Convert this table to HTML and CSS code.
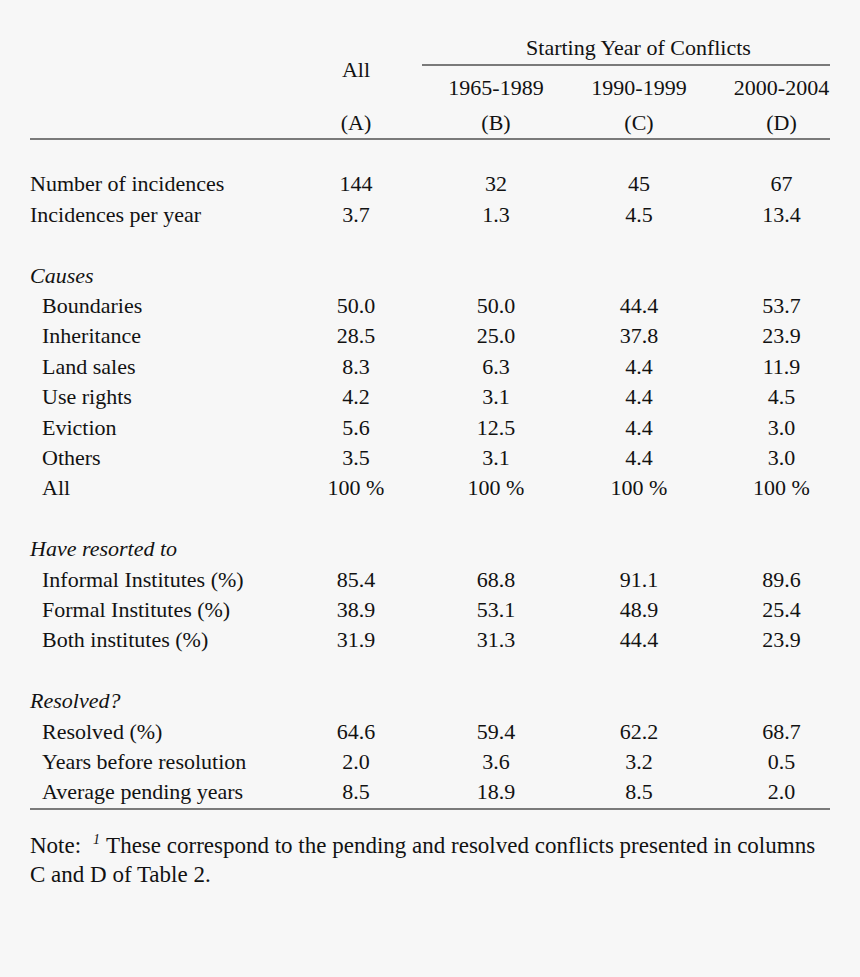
FILE: index.html
```html
<!DOCTYPE html>
<html lang="en">
<head>
    <meta charset="UTF-8">
    <meta name="viewport" content="width=device-width, initial-scale=1.0">
    <title>Land conflicts by starting year</title>
    <link rel="stylesheet" href="styles.css">
</head>
<body>
    <div class="page">
        <table class="stats">
            <colgroup>
                <col class="col-label">
                <col class="col-a">
                <col class="col-b">
                <col class="col-c">
                <col class="col-d">
            </colgroup>
            <thead>
                <tr class="head-top">
                    <th></th>
                    <th rowspan="2" class="all-head">All</th>
                    <th colspan="3" class="span-head">Starting Year of Conflicts</th>
                </tr>
                <tr class="head-years">
                    <th></th>
                    <th>1965-1989</th>
                    <th>1990-1999</th>
                    <th class="last">2000-2004</th>
                </tr>
                <tr class="head-letters">
                    <th></th>
                    <th>(A)</th>
                    <th>(B)</th>
                    <th>(C)</th>
                    <th class="last">(D)</th>
                </tr>
            </thead>
            <tbody>
                <tr class="gap"><td colspan="5"></td></tr>
                <tr><td class="label">Number of incidences</td><td>144</td><td>32</td><td>45</td><td class="last">67</td></tr>
                <tr><td class="label">Incidences per year</td><td>3.7</td><td>1.3</td><td>4.5</td><td class="last">13.4</td></tr>
                <tr class="gap"><td colspan="5"></td></tr>

                <tr><td class="label group">Causes</td><td colspan="4"></td></tr>
                <tr><td class="label sub">Boundaries</td><td>50.0</td><td>50.0</td><td>44.4</td><td class="last">53.7</td></tr>
                <tr><td class="label sub">Inheritance</td><td>28.5</td><td>25.0</td><td>37.8</td><td class="last">23.9</td></tr>
                <tr><td class="label sub">Land sales</td><td>8.3</td><td>6.3</td><td>4.4</td><td class="last">11.9</td></tr>
                <tr><td class="label sub">Use rights</td><td>4.2</td><td>3.1</td><td>4.4</td><td class="last">4.5</td></tr>
                <tr><td class="label sub">Eviction</td><td>5.6</td><td>12.5</td><td>4.4</td><td class="last">3.0</td></tr>
                <tr><td class="label sub">Others</td><td>3.5</td><td>3.1</td><td>4.4</td><td class="last">3.0</td></tr>
                <tr><td class="label sub">All</td><td>100 %</td><td>100 %</td><td>100 %</td><td class="last">100 %</td></tr>
                <tr class="gap"><td colspan="5"></td></tr>

                <tr><td class="label group">Have resorted to</td><td colspan="4"></td></tr>
                <tr><td class="label sub">Informal Institutes (%)</td><td>85.4</td><td>68.8</td><td>91.1</td><td class="last">89.6</td></tr>
                <tr><td class="label sub">Formal Institutes (%)</td><td>38.9</td><td>53.1</td><td>48.9</td><td class="last">25.4</td></tr>
                <tr><td class="label sub">Both institutes (%)</td><td>31.9</td><td>31.3</td><td>44.4</td><td class="last">23.9</td></tr>
                <tr class="gap"><td colspan="5"></td></tr>

                <tr><td class="label group">Resolved?</td><td colspan="4"></td></tr>
                <tr><td class="label sub">Resolved (%)</td><td>64.6</td><td>59.4</td><td>62.2</td><td class="last">68.7</td></tr>
                <tr><td class="label sub">Years before resolution</td><td>2.0</td><td>3.6</td><td>3.2</td><td class="last">0.5</td></tr>
                <tr class="end"><td class="label sub">Average pending years</td><td>8.5</td><td>18.9</td><td>8.5</td><td class="last">2.0</td></tr>
            </tbody>
        </table>

        <p class="note"><span class="note-tag">Note:</span><sup>1</sup>These correspond to the pending and resolved conflicts presented in columns C and D of Table 2.</p>
    </div>
</body>
</html>
```

FILE: styles.css
```css
* {
    margin: 0;
    padding: 0;
    box-sizing: border-box;
}

body {
    font-family: 'Liberation Serif', 'Times New Roman', serif;
    font-size: 22px;
    color: #121212;
    background: #f7f7f7;
}

.page {
    width: 860px;
    min-height: 977px;
    padding: 31px 30px 0 30px;
}

.stats {
    width: 800px;
    table-layout: fixed;
    border-collapse: collapse;
}

.col-label { width: 260px; }
.col-a { width: 132px; }
.col-b { width: 148px; }
.col-c { width: 138px; }
.col-d { width: 122px; }

.stats th,
.stats td {
    font-weight: normal;
    text-align: center;
    padding: 0;
    white-space: nowrap;
}

.stats .last {
    padding-left: 25px;
}

.head-top th {
    height: 34px;
}

.head-top .span-head {
    padding-left: 25px;
    vertical-align: middle;
    border-bottom: 2px solid #7a7a7a;
}

.head-top .all-head {
    vertical-align: middle;
}

.head-years th {
    height: 44px;
}

.head-letters th {
    height: 30px;
    vertical-align: middle;
    padding-bottom: 1px;
    border-bottom: 2px solid #7a7a7a;
}

.stats tbody td {
    height: 30.4px;
    line-height: 30.4px;
}

.stats tbody td.label {
    text-align: left;
}

.group {
    font-style: italic;
}

.stats tbody td.sub {
    padding-left: 12px;
}

.stats tr.end td {
    border-bottom: 2px solid #7a7a7a;
}

.note {
    margin-top: 21px;
    font-size: 23px;
    line-height: 29px;
    width: 800px;
}

.note-tag {
    margin-right: 12px;
}

.note sup {
    display: inline-block;
    font-style: italic;
    font-size: 14px;
    line-height: 14px;
    vertical-align: 9px;
    margin-right: 6px;
}
```
